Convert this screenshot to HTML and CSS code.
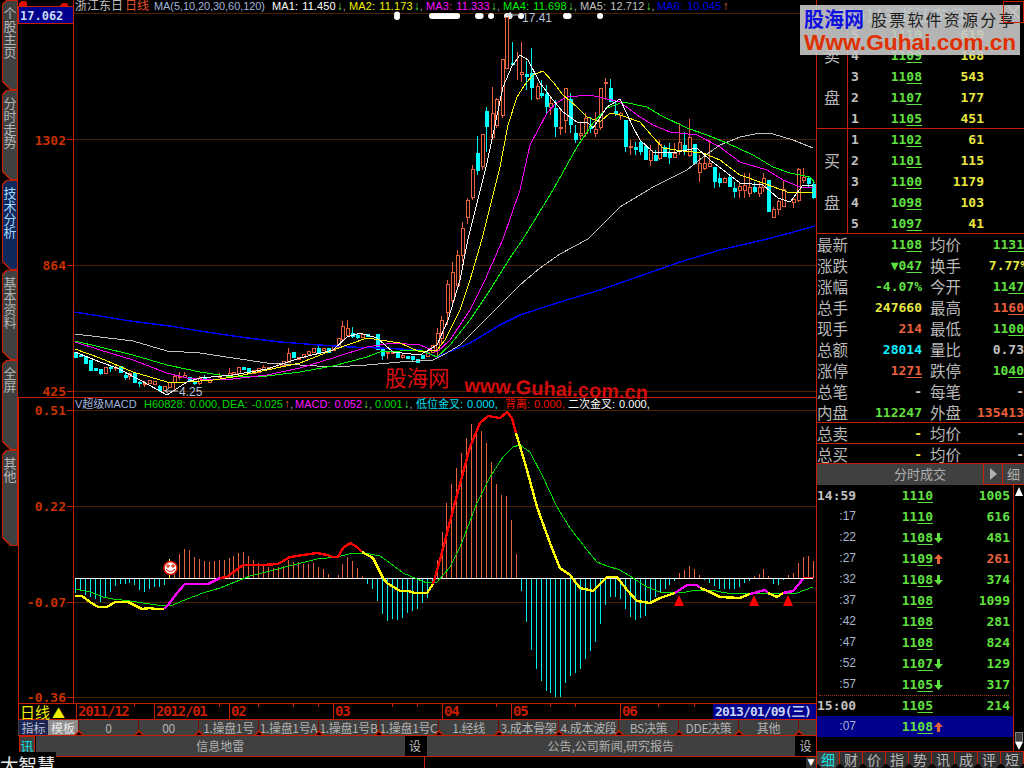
FILE: index.html
```html
<!DOCTYPE html>
<html lang="zh">
<head>
<meta charset="utf-8">
<title>大智慧</title>
<link rel="stylesheet" href="styles.css">
</head>
<body>
<div class="app">
  <nav class="tabs">
    <div class="tab"><div class="tab-in">个股主页</div></div>
    <div class="tab"><div class="tab-in">分时走势</div></div>
    <div class="tab tab-on"><div class="tab-in">技术分析</div></div>
    <div class="tab"><div class="tab-in">基本资料</div></div>
    <div class="tab"><div class="tab-in">全屏</div></div>
    <div class="tab tab-last"><div class="tab-in">其他</div></div>
  </nav>

  <main class="main">
    <div class="plots">
      <svg class="chart" viewBox="18 0 798 703" width="798" height="703">
        <g class="grid">
          <path d="M74 13.5H816M74 139.5H816M74 265.5H816M74 391.5H816M74 410.5H816M74 506.5H816M74 602.5H816M74 697.5H816"/>
        </g>
        <g class="frame">
          <path d="M73.5 0V703M18.5 397V703M18 397.5H816"/>
          <path d="M67 139.5H73M67 265.5H73M67 391.5H73M67 410.5H73M67 506.5H73M67 602.5H73M67 697.5H73"/>
          <path class="blob" d="M19 6V3L21 1H25L27 3V6ZM60 6V5L62 3H66L68 5V6Z"/>
        </g>
        <rect class="pricebox" x="18.5" y="6.5" width="55" height="17"/>
        <text class="pricetxt" x="20" y="20">17.062</text>
        <text class="axis" x="66" y="145">1302</text>
        <text class="axis" x="66" y="270">864</text>
        <text class="axis" x="66" y="396">425</text>
        <text class="axis" x="66" y="415">0.51</text>
        <text class="axis" x="66" y="511">0.22</text>
        <text class="axis" x="66" y="607">-0.07</text>
        <text class="axis" x="66" y="702">-0.36</text>

        <path class="dots" d="M432 16H458M478 16H481M491 16H493M507 16H512M521 16H523M566 16H571M600 16H602M397 14.500V17.500"/>

        <!-- price candles -->
        <path class="wick-r" d="M115.5 365V371M129.5 372V380M144.5 381V387M174.5 374V392M179.5 372V380M184.5 372V378M199.5 376V385M219.5 373V378M229.5 368V377M263.5 365V371M288.5 348V363M342.5 321V340M347.5 320V337M387.5 351V359M402.5 354V359M437.5 328V358M441.5 316V345M447.5 280V325M452.5 262V305M457.5 250V290M462.5 222V262M467.5 198V224M472.5 165V200M482.5 134V170M492.5 87V140M496.5 98V128M502.5 59V118M506.5 17V68M517.5 52V80M521.5 42V82M537.5 83V100M550.5 98V115M560.5 110V135M565.5 88V133M580.5 122V140M585.5 113V137M595.5 112V137M600.5 88V130M605.5 78V100M620.5 112V120M630.5 140V155M650.5 145V166M659.5 140V160M674.5 143V158M679.5 123V155M689.5 119V157M699.5 155V182M704.5 153V170M709.5 140V167M724.5 177V183M739.5 182V198M744.5 173V198M749.5 173V197M759.5 182V197M763.5 173V192M773.5 207V218M778.5 200V215M783.5 180V207M793.5 197V208M798.5 168V202M803.5 168V183"/>
        <path class="body-r" d="M104 367h3V373h-3zM114 367h3V368h-3zM128 373h3V376h-3zM143 383h3V384h-3zM148 380h3V383h-3zM153 381h3V384h-3zM163 386h3V390h-3zM168 382h3V387h-3zM173 376h3V382h-3zM178 376h3V377h-3zM183 375h3V377h-3zM198 378h3V383h-3zM208 379h3V382h-3zM218 376h3V377h-3zM228 373h3V376h-3zM232 372h3V374h-3zM237 367h3V373h-3zM252 370h3V373h-3zM257 368h3V372h-3zM262 367h3V370h-3zM267 367h3V369h-3zM277 363h3V367h-3zM282 361h3V365h-3zM287 353h3V362h-3zM297 357h3V359h-3zM302 354h3V357h-3zM307 351h3V354h-3zM312 348h3V352h-3zM322 348h3V350h-3zM332 346h3V350h-3zM337 338h3V347h-3zM341 326h3V339h-3zM346 328h3V335h-3zM361 334h3V337h-3zM386 352h3V353h-3zM391 352h3V353h-3zM401 355h3V357h-3zM426 352h3V356h-3zM431 345h3V352h-3zM436 333h3V350h-3zM440 320h3V338h-3zM446 284h3V312h-3zM451 272h3V300h-3zM456 255h3V285h-3zM461 228h3V255h-3zM466 200h3V217h-3zM471 169h3V197h-3zM481 134h3V166h-3zM491 113h3V137h-3zM495 99h3V125h-3zM501 59h3V115h-3zM505 17h3V68h-3zM520 72h3V74h-3zM536 86h3V98h-3zM549 103h3V107h-3zM559 127h3V128h-3zM564 88h3V120h-3zM579 133h3V135h-3zM584 118h3V133h-3zM594 129h3V133h-3zM599 88h3V127h-3zM604 82h3V83h-3zM619 113h3V115h-3zM629 146h3V147h-3zM649 150h3V160h-3zM658 144h3V158h-3zM673 153h3V157h-3zM678 142h3V150h-3zM688 137h3V155h-3zM698 163h3V172h-3zM703 163h3V168h-3zM708 163h3V166h-3zM723 178h3V182h-3zM738 186h3V190h-3zM743 185h3V190h-3zM748 187h3V193h-3zM758 187h3V193h-3zM762 178h3V187h-3zM772 209h3V217h-3zM777 201h3V209h-3zM782 189h3V206h-3zM792 199h3V202h-3zM797 169h3V200h-3zM802 177h3V180h-3z"/>
        <path class="wick-c" d="M100.5 369V375M110.5 365V372M125.5 372V380M139.5 381V387M159.5 385V392M194.5 381V385M204.5 375V381M293.5 352V358M318.5 346V354M352.5 327V338M357.5 333V339M382.5 348V360M397.5 353V358M412.5 356V361M477.5 136V175M486.5 107V152M512.5 42V65M526.5 61V90M531.5 48V100M541.5 80V98M546.5 85V115M555.5 100V137M570.5 93V133M575.5 125V143M590.5 117V133M610.5 79V102M615.5 102V116M625.5 120V152M635.5 142V155M640.5 140V155M645.5 145V160M655.5 150V160M664.5 145V157M669.5 143V164M684.5 132V155M694.5 144V165M714.5 167V188M719.5 173V187M729.5 175V187M734.5 182V198M754.5 182V193M768.5 180V212M808.5 177V187M813.5 180V199"/>
        <path class="body-c" d="M74 352h3V357h-3zM79 355h3V356h-3zM84 356h3V363h-3zM89 360h3V370h-3zM94 368h3V370h-3zM99 369h3V373h-3zM109 367h3V368h-3zM119 366h3V372h-3zM124 375h3V377h-3zM133 373h3V382h-3zM138 382h3V383h-3zM158 386h3V390h-3zM188 377h3V381h-3zM193 382h3V383h-3zM203 377h3V379h-3zM242 367h3V369h-3zM247 368h3V373h-3zM292 352h3V357h-3zM317 348h3V352h-3zM327 348h3V352h-3zM351 333h3V336h-3zM356 335h3V337h-3zM366 334h3V336h-3zM376 334h3V349h-3zM381 348h3V355h-3zM396 353h3V357h-3zM406 356h3V358h-3zM411 356h3V359h-3zM416 359h3V362h-3zM421 355h3V358h-3zM476 153h3V170h-3zM485 111h3V126h-3zM511 63h3V64h-3zM525 74h3V76h-3zM530 73h3V87h-3zM540 93h3V95h-3zM545 94h3V106h-3zM554 108h3V126h-3zM569 99h3V124h-3zM574 133h3V139h-3zM589 126h3V128h-3zM609 88h3V101h-3zM614 111h3V113h-3zM624 120h3V146h-3zM634 147h3V149h-3zM639 142h3V151h-3zM644 146h3V159h-3zM654 155h3V160h-3zM663 147h3V156h-3zM668 153h3V157h-3zM683 145h3V151h-3zM693 144h3V163h-3zM713 167h3V181h-3zM718 178h3V182h-3zM728 177h3V186h-3zM733 188h3V191h-3zM753 187h3V191h-3zM767 180h3V211h-3zM807 178h3V183h-3zM812 184h3V197h-3z"/>

        <!-- moving averages -->
        <polyline class="ln ma6" points="74,312 100,316 130,321 170,326 200,331 240,337 280,342 320,345 350,347 380,348 420,350 437,357 470,343 500,325 520,315 560,302 600,290 640,276 680,262 720,250 767,239 790,233 815,226"/>
        <polyline class="ln ma5" points="75,334 100,337 133,341 167,351 200,353 233,358 267,363 300,365 333,367 367,365 400,362 433,360 445,354 460,345 480,325 500,305 520,285 540,268 560,254 588,239 620,207 653,187 687,170 703,157 720,145 740,137 760,133 773,134 793,140 813,148"/>
        <polyline class="ln ma4" points="75,341 100,347 133,355 167,365 200,372 220,375 233,377 267,376 300,372 333,366 367,357 380,352 420,350 437,357 450,345 470,320 490,290 510,258 523,239 553,190 577,147 593,123 607,108 623,102 647,107 660,115 687,128 707,135 727,143 753,155 773,167 790,173 810,177 815,183"/>
        <polyline class="ln ma3" points="75,342 100,350 133,360 167,373 187,378 213,380 233,379 267,375 300,368 333,358 367,347 393,343 420,345 437,352 450,340 470,310 485,280 503,239 520,190 530,145 547,113 556,103 567,97 590,95 620,102 637,115 653,125 670,132 697,135 720,147 740,162 767,170 783,180 800,187 813,187"/>
        <polyline class="ln ma2" points="75,349 100,358 133,372 167,382 187,382 213,380 233,377 267,370 300,363 333,350 367,338 400,343 420,352 437,350 445,340 460,310 470,280 482,239 500,167 508,125 517,97 526,83 533,75 543,71 553,82 563,95 577,107 587,117 600,122 610,113 620,115 640,122 653,137 663,148 683,151 703,153 720,160 740,175 763,183 790,193 802,192 813,192"/>
        <polyline class="ln ma1" points="75,352 100,362 117,368 140,380 167,395 187,382 200,378 233,375 267,369 300,358 333,350 347,337 360,333 377,338 393,352 420,355 437,345 448,320 460,280 468,239 487,163 503,87 512,66 520,55 528,60 540,83 553,100 563,112 577,122 587,122 593,128 607,107 620,99 633,127 640,140 653,152 677,152 697,148 710,160 727,173 740,183 763,185 778,198 790,202 803,185 813,185"/>

        <path class="thin-g" d="M507 15H520M507 15L511 12M507 15L511 18"/>
        <text class="note" x="522" y="22">17.41</text>
        <path class="thin-g" d="M165 391H178M165 391L169 388M165 391L169 394"/>
        <text class="note" x="179" y="396">4.25</text>

        <text class="wm-cn" x="385" y="386">股海网</text>
        <text class="wm-en" x="464" y="392" transform="rotate(2.3 464 392)">www.Guhai.com.cn</text>

        <!-- MACD histogram -->
        <path class="bar-c" d="M75.5 578V593M80.5 578V590M85.5 578V595M90.5 578V597M95.5 578V599M100.5 578V602M105.5 578V597M110.5 578V592M115.5 578V586M120.5 578V584M125.5 578V584M129.5 578V583M134.5 578V585M139.5 578V590M144.5 578V592M149.5 578V589M154.5 578V587M159.5 578V587M164.5 578V585M367.5 578V584M372.5 578V589M377.5 578V601M382.5 578V614M387.5 578V621M392.5 578V619M397.5 578V620M402.5 578V618M407.5 578V613M412.5 578V611M417.5 578V609M422.5 578V603M427.5 578V598M432.5 578V585M521.5 578V591M526.5 578V622M531.5 578V650M536.5 578V669M541.5 578V681M546.5 578V691M550.5 578V693M555.5 578V697M560.5 578V697M565.5 578V683M570.5 578V676M575.5 578V673M580.5 578V669M585.5 578V659M590.5 578V651M595.5 578V642M600.5 578V624M605.5 578V605M610.5 578V597M615.5 578V597M620.5 578V599M625.5 578V609M630.5 578V617M635.5 578V620M640.5 578V618M645.5 578V616M650.5 578V604M655.5 578V597M660.5 578V592M665.5 578V589M669.5 578V585M674.5 578V581M704.5 578V580M709.5 578V583M714.5 578V586M719.5 578V589M724.5 578V589M729.5 578V589M734.5 578V589M739.5 578V587M744.5 578V583M749.5 578V581M773.5 578V584M778.5 578V585M783.5 578V580"/>
        <path class="bar-r" d="M174.5 578V573M179.5 578V554M184.5 578V549M189.5 578V550M194.5 578V557M199.5 578V559M204.5 578V561M209.5 578V562M214.5 578V561M219.5 578V560M224.5 578V560M229.5 578V558M233.5 578V556M238.5 578V553M243.5 578V552M248.5 578V556M253.5 578V560M258.5 578V563M263.5 578V565M268.5 578V567M273.5 578V568M278.5 578V567M283.5 578V566M288.5 578V560M293.5 578V562M298.5 578V562M303.5 578V564M308.5 578V564M313.5 578V563M318.5 578V567M323.5 578V569M328.5 578V574M338.5 578V575M342.5 578V564M347.5 578V557M352.5 578V561M357.5 578V568M362.5 578V576M437.5 578V560M442.5 578V532M446.5 578V503M451.5 578V484M456.5 578V468M461.5 578V453M466.5 578V438M471.5 578V424M476.5 578V432M481.5 578V431M486.5 578V443M491.5 578V462M496.5 578V484M501.5 578V495M506.5 578V496M511.5 578V520M516.5 578V554M679.5 578V573M684.5 578V570M689.5 578V566M694.5 578V569M699.5 578V575M754.5 578V576M759.5 578V574M763.5 578V569M768.5 578V576M788.5 578V575M793.5 578V573M798.5 578V563M803.5 578V557M808.5 578V556M813.5 578V561"/>
        <path class="zero" d="M75 578.5H813"/>

        <!-- MACD lines -->
        <polyline class="ln dea" points="75,589 90,592 103,597 113,599 130,601 143,603 157,605 173,605 187,599 203,593 220,588 240,580 250,576 270,571 297,564 317,559 337,557 353,553 370,554 380,556 390,563 403,573 417,579 427,583 437,582 450,567 460,547 477,503 490,477 503,457 513,447 520,445 530,452 543,477 557,507 570,528 587,550 597,562 607,566 620,570 633,578 647,587 660,592 680,593 697,590 710,590 727,593 750,594 770,593 780,594 797,593 813,587"/>
        <polyline class="thick y" points="75,596 82,596 90,602 98,607 107,607 115,602 128,602 142,609 150,608 155,609 164,609"/>
        <polyline class="thick m" points="164,609 168,605 177,593 185,584 208,584 220,578"/>
        <polyline class="thick r" points="220,578 227,577 243,565 253,565 263,565 278,564 290,557 303,555 317,553 327,555 333,557 338,557 343,548 350,543 357,547 362,552"/>
        <polyline class="thick y" points="362,552 373,558 383,578 387,583 400,591 408,591 415,593 427,593 433,584"/>
        <polyline class="thick r" points="433,584 440,560 453,510 463,473 470,447 480,423 488,416 500,418 507,412 512,418 516,433"/>
        <polyline class="thick y" points="516,433 527,470 537,507 550,543 560,568 570,575 580,588 593,591 607,577 617,577 627,590 637,601 650,603 660,598 675,593"/>
        <polyline class="thick m" points="675,593 687,585 697,585 700,588"/>
        <polyline class="thick y" points="700,588 710,592 720,597 740,598 750,594"/>
        <polyline class="thick m" points="750,594 765,590 768,593"/>
        <polyline class="thick y" points="768,593 777,597 783,593"/>
        <polyline class="thick m" points="783,593 793,591 803,579"/>
        <polyline class="thin-r" points="803,578 813,577"/>

        <path class="tri" d="M674 606H684L679 595ZM749 606H759L754 595ZM783 606H793L788 595Z"/>
        <path class="stick" d="M169.5 559V578"/>
        <circle class="smile" cx="170.5" cy="568" r="6.5"/>
        <path class="smile-f" d="M167 565h2v2h-2zM172 565h2v2h-2zM166 569Q170.500 574 175 569"/>
      </svg>

      <div class="legend legend-top">
        <span class="lg lg-a c-gray">浙江东日</span>
        <span class="lg lg-b c-red">日线</span>
        <span class="lg lg-c c-blue">MA(5,10,20,30,60,120)</span>
        <span class="lg lg-m c-white">MA1: 11.450<i class="c-ga">↓</i><i class="c-comma">,</i></span>
        <span class="lg lg-m c-yel">MA2: 11.173<i class="c-ga">↓</i><i class="c-comma">,</i></span>
        <span class="lg lg-m c-mag">MA3: 11.333<i class="c-ga">↓</i><i class="c-comma">,</i></span>
        <span class="lg lg-m c-lime">MA4: 11.698<i class="c-ga">↓</i><i class="c-comma">,</i></span>
        <span class="lg lg-m c-gray">MA5: 12.712<i class="c-ga">↓</i><i class="c-comma">,</i></span>
        <span class="lg lg-m c-navy">MA6: 10.045<i class="c-ra">↑</i></span>
      </div>
      <div class="legend legend-macd">
        <span class="lg w69 c-blue">V超级MACD</span>
        <span class="lg w78 c-dg">H60828: 0.000,</span>
        <span class="lg w73 c-dg">DEA: -0.025<i class="c-ra">↑</i><i class="c-comma">,</i></span>
        <span class="lg w80 c-mag">MACD: 0.052<i class="c-ga">↓</i><i class="c-comma">,</i></span>
        <span class="lg w41 c-dg">0.001<i class="c-ga">↓</i><i class="c-comma">,</i></span>
        <span class="lg w89 c-cy">低位金叉: 0.000,</span>
        <span class="lg w63 c-rr">背离: 0.000,</span>
        <span class="lg c-white">二次金叉: 0.000,</span>
      </div>
    </div>

    <div class="timeaxis">
      <div class="period">日线<b class="up">▲</b></div>
      <div class="date w80">2011/12</div>
      <div class="date w75">2012/01</div>
      <div class="date w104">02</div>
      <div class="date w109">03</div>
      <div class="date w69">04</div>
      <div class="date w109">05</div>
      <div class="date w93">06</div>
      <div class="curdate">2013/01/09(三)</div>
      <svg class="ticks" viewBox="18 0 798 5" width="798" height="5">
        <path d="M134.500 0V3M219.500 0V3M258.500 0V3M293.500 0V3M318.500 0V3M392.500 0V3M417.500 0V3M496.500 0V3M550.500 0V3M575.500 0V3M658.500 0V3M694.500 0V3"/>
      </svg>
    </div>

    <div class="tplrow">
      <div class="tpl-a">指标</div>
      <div class="tpl-b">模板</div>
      <div class="tpl">0</div>
      <div class="tpl">00</div>
      <div class="tpl">1.操盘1号</div>
      <div class="tpl">1.操盘1号A</div>
      <div class="tpl">1.操盘1号B</div>
      <div class="tpl">1.操盘1号C</div>
      <div class="tpl">1.经线</div>
      <div class="tpl">3.成本骨架</div>
      <div class="tpl">4.成本波段</div>
      <div class="tpl">BS决策</div>
      <div class="tpl">DDE决策</div>
      <div class="tpl">其他</div>
      <div class="tpl tpl-end"></div>
    </div>

    <div class="inforow">
      <div class="xun">讯</div>
      <div class="info">信息地雷</div>
      <div class="set">设</div>
      <div class="info info-2">公告,公司新闻,研究报告</div>
      <div class="set">设</div>
    </div>
    <div class="foot"><div class="footline"></div><div class="footbtn">▼</div></div>
  </main>

  <aside class="panel">
    <div class="stock">600113 浙江东日</div>

    <section class="book">
      <div class="side"><span>卖</span><span>盘</span></div>
      <div class="rows">
        <div class="row"><span class="lv">5</span><span class="pr">11<u>10</u></span><span class="vol">619</span></div>
        <div class="row"><span class="lv">4</span><span class="pr">11<u>09</u></span><span class="vol">168</span></div>
        <div class="row"><span class="lv">3</span><span class="pr">11<u>08</u></span><span class="vol">543</span></div>
        <div class="row"><span class="lv">2</span><span class="pr">11<u>07</u></span><span class="vol">177</span></div>
        <div class="row"><span class="lv">1</span><span class="pr">11<u>05</u></span><span class="vol">451</span></div>
      </div>
    </section>
    <section class="book">
      <div class="side"><span>买</span><span>盘</span></div>
      <div class="rows">
        <div class="row"><span class="lv">1</span><span class="pr">11<u>02</u></span><span class="vol">61</span></div>
        <div class="row"><span class="lv">2</span><span class="pr">11<u>01</u></span><span class="vol">115</span></div>
        <div class="row"><span class="lv">3</span><span class="pr">11<u>00</u></span><span class="vol">1179</span></div>
        <div class="row"><span class="lv">4</span><span class="pr">10<u>98</u></span><span class="vol">103</span></div>
        <div class="row"><span class="lv">5</span><span class="pr">10<u>97</u></span><span class="vol">41</span></div>
      </div>
    </section>

    <section class="stats">
      <div class="kv"><span class="k">最新</span><span class="v g">11<u>08</u></span><span></span><span class="k">均价</span><span class="v g">11<u>31</u></span></div>
      <div class="kv"><span class="k">涨跌</span><span class="v g"><b class="dn">▼</b>0<u>47</u></span><span></span><span class="k">换手</span><span class="v y clip">7.77%</span></div>
      <div class="kv"><span class="k">涨幅</span><span class="v g">-4.07%</span><span></span><span class="k">今开</span><span class="v g">11<u>47</u></span></div>
      <div class="kv"><span class="k">总手</span><span class="v y">247660</span><span></span><span class="k">最高</span><span class="v r">11<u>60</u></span></div>
      <div class="kv"><span class="k">现手</span><span class="v r">214</span><span></span><span class="k">最低</span><span class="v g">11<u>00</u></span></div>
      <div class="kv"><span class="k">总额</span><span class="v c">28014</span><span></span><span class="k">量比</span><span class="v w">0.73</span></div>
      <div class="kv"><span class="k">涨停</span><span class="v r">12<u>71</u></span><span></span><span class="k">跌停</span><span class="v g">10<u>40</u></span></div>
      <div class="kv"><span class="k">总笔</span><span class="v w">-</span><span></span><span class="k">每笔</span><span class="v w">-</span></div>
      <div class="kv"><span class="k">内盘</span><span class="v g">112247</span><span></span><span class="k">外盘</span><span class="v r">135413</span></div>
    </section>
    <section class="sum sum-a">
      <div class="kv"><span class="k">总卖</span><span class="v y">-</span><span></span><span class="k">均价</span><span class="v w">-</span></div>
    </section>
    <section class="sum sum-b">
      <div class="kv"><span class="k">总买</span><span class="v y">-</span><span></span><span class="k">均价</span><span class="v w">-</span></div>
    </section>

    <div class="tickhead">
      <div class="th-t">分时成交</div>
      <div class="th-b"><span class="play"></span></div>
      <div class="th-x">细</div>
    </div>

    <section class="tickwrap">
      <div class="ticklist">
        <div class="tick"><span class="t tb">14:59</span><span class="pr">11<u>10</u></span><span class="ar"></span><span class="tv g">1005</span></div>
        <div class="tick"><span class="t">:17</span><span class="pr">11<u>10</u></span><span class="ar"></span><span class="tv g">616</span></div>
        <div class="tick"><span class="t">:22</span><span class="pr">11<u>08</u></span><span class="ar"><svg class="ic ic-d" viewBox="0 0 9 10"><path d="M3 0H6V5H9L4.500 10 0 5H3Z"/></svg></span><span class="tv g">481</span></div>
        <div class="tick"><span class="t">:27</span><span class="pr">11<u>09</u></span><span class="ar"><svg class="ic ic-u" viewBox="0 0 9 10"><path d="M3 10H6V5H9L4.500 0 0 5H3Z"/></svg></span><span class="tv r">261</span></div>
        <div class="tick"><span class="t">:32</span><span class="pr">11<u>08</u></span><span class="ar"><svg class="ic ic-d" viewBox="0 0 9 10"><path d="M3 0H6V5H9L4.500 10 0 5H3Z"/></svg></span><span class="tv g">374</span></div>
        <div class="tick"><span class="t">:37</span><span class="pr">11<u>08</u></span><span class="ar"></span><span class="tv g">1099</span></div>
        <div class="tick"><span class="t">:42</span><span class="pr">11<u>08</u></span><span class="ar"></span><span class="tv g">281</span></div>
        <div class="tick"><span class="t">:47</span><span class="pr">11<u>08</u></span><span class="ar"></span><span class="tv g">824</span></div>
        <div class="tick"><span class="t">:52</span><span class="pr">11<u>07</u></span><span class="ar"><svg class="ic ic-d" viewBox="0 0 9 10"><path d="M3 0H6V5H9L4.500 10 0 5H3Z"/></svg></span><span class="tv g">129</span></div>
        <div class="tick"><span class="t">:57</span><span class="pr">11<u>05</u></span><span class="ar"><svg class="ic ic-d" viewBox="0 0 9 10"><path d="M3 0H6V5H9L4.500 10 0 5H3Z"/></svg></span><span class="tv g">317</span></div>
        <div class="tick tick-dot"><span class="t tb">15:00</span><span class="pr">11<u>05</u></span><span class="ar"></span><span class="tv g">214</span></div>
        <div class="tick tick-sel"><span class="t">:07</span><span class="pr">11<u>08</u></span><span class="ar"><svg class="ic ic-u" viewBox="0 0 9 10"><path d="M3 10H6V5H9L4.500 0 0 5H3Z"/></svg></span><span class="tv"></span></div>
      </div>
      <div class="scroll">
        <div class="sc-up"></div>
        <div class="sc-fill"></div>
        <div class="sc-thumb"></div>
        <div class="sc-dn"></div>
      </div>
    </section>

    <div class="ptabs">
      <div class="ptab ptab-on">细</div>
      <div class="ptab">财</div>
      <div class="ptab">价</div>
      <div class="ptab">指</div>
      <div class="ptab">势</div>
      <div class="ptab">讯</div>
      <div class="ptab">成</div>
      <div class="ptab">评</div>
      <div class="ptab">短</div>
    </div>

    <div class="promo">
      <div class="promo-top"><span class="promo-a">股海网</span><span class="promo-b">股票软件资源分享</span></div>
      <div class="promo-c">Www.Guhai.com.cn</div>
    </div>
    <div class="closebtn"><svg viewBox="0 0 20 21" width="19" height="20"><path d="M4 4L16 17M16 4L4 17"/></svg></div>
  </aside>

  <div class="brand">大智慧</div>
</div>
</body>
</html>
```
FILE: styles.css
```css
* { box-sizing: border-box; }
html, body { margin: 0; padding: 0; background: #000; overflow: hidden; }
body { font-family: "Noto Sans CJK SC", "Liberation Sans", sans-serif; }
i, b { font-style: normal; font-weight: normal; }
u { text-decoration: underline; text-underline-offset: 2px; text-decoration-thickness: 1px; }

.app { position: relative; display: flex; width: 1024px; height: 768px; overflow: hidden; background: #000; }

/* left tabs */
.tabs { width: 18px; flex: none; display: flex; flex-direction: column; padding-left: 2px; }
.tab { width: 16px; height: 90px; padding: 1px; background: #c81e00;
  clip-path: polygon(4px 0, 100% 0, 100% 100%, 8px 100%, 0 calc(100% - 8px), 0 4px); }
.tab-last { height: 96px; }
.tab-in { height: 100%; background: #404040; color: #b4b4b4; font-size: 13px; line-height: 13px;
  padding-top: 5px; text-align: center; letter-spacing: 0;
  clip-path: polygon(4px 0, 100% 0, 100% 100%, 8px 100%, 0 calc(100% - 8px), 0 4px); }
.tab-on .tab-in { background: #10285c; color: #9fd8ff; }

/* main */
.main { width: 798px; flex: none; display: flex; flex-direction: column; }
.plots { position: relative; height: 703px; }
.chart { display: block; }

.grid path { fill: none; stroke: #4a2200; stroke-width: 1; shape-rendering: crispEdges; }
.frame path { fill: none; stroke: #c81e00; stroke-width: 1; shape-rendering: crispEdges; }
.frame .blob { fill: #e01000; stroke: none; }
.pricebox { fill: #00008c; stroke: #c81e00; stroke-width: 1; shape-rendering: crispEdges; }
.pricetxt { font: bold 12px "DejaVu Sans Mono", monospace; fill: #c8d8f4; }
.axis { font: bold 13px "DejaVu Sans Mono", monospace; fill: #c83000; text-anchor: end; }
.dots { fill: none; stroke: #fff; stroke-width: 6; stroke-dasharray: 0.1 2.400; stroke-linecap: round; }
.wick-r, .bar-r { fill: none; stroke: #e8603c; stroke-width: 1; shape-rendering: crispEdges; }
.body-r { fill: #000; stroke: #e8603c; stroke-width: 1; shape-rendering: crispEdges; }
.wick-c, .bar-c { fill: none; stroke: #00f0f0; stroke-width: 1; shape-rendering: crispEdges; }
.body-c { fill: #00ffff; stroke: #00ffff; stroke-width: 1; shape-rendering: crispEdges; }
.ln { fill: none; stroke-width: 1; shape-rendering: crispEdges; }
.ma1 { stroke: #fff; }
.ma2 { stroke: #ffff00; }
.ma3 { stroke: #ff00ff; }
.ma4 { stroke: #00ff00; }
.ma5 { stroke: #c0c0c0; }
.ma6 { stroke: #0000ff; stroke-width: 1.4; }
.dea { stroke: #00e000; stroke-width: 1; }
.thick { fill: none; stroke-width: 2.4; stroke-linejoin: round; shape-rendering: crispEdges; }
.y { stroke: #ffff00; }
.m { stroke: #ff00ff; }
.r { stroke: #ff0000; }
.thin-r { fill: none; stroke: #ff0000; stroke-width: 1; shape-rendering: crispEdges; }
.zero { stroke: #fff; stroke-width: 1.4; fill: none; shape-rendering: crispEdges; }
.thin-g { fill: none; stroke: #c0c8d8; stroke-width: 1; }
.note { font: 12px "Liberation Sans", sans-serif; fill: #b8c4dc; }
.wm-cn { font: 400 21.500px "Noto Sans CJK SC", sans-serif; fill: #d81010; }
.wm-en { font: bold 20px "Liberation Sans", sans-serif; fill: #d00c0c; }
.tri { fill: #ff0000; }
.stick { fill: none; stroke: #ffff00; stroke-width: 1; shape-rendering: crispEdges; }
.smile { fill: #fff; stroke: #e81000; stroke-width: 1.5; }
.smile-f { fill: none; stroke: #e81000; stroke-width: 1; }

/* legends */
.legend { position: absolute; left: 57px; display: flex; white-space: nowrap; height: 13px;
  font: 11px/13px "Liberation Sans", "Noto Sans CJK SC", sans-serif; }
.legend-top { top: 0; }
.legend-macd { top: 398px; }
.lg { display: block; flex: none; word-spacing: 1px; }
.lg-a { width: 50px; font-size: 12px; }
.lg-b { width: 29px; font-size: 12px; }
.lg-c { width: 118px; letter-spacing: -.08px; }
.lg-m { width: 77px; letter-spacing: .1px; }
.w69 { width: 69px; }
.w78 { width: 78px; }
.w73 { width: 73px; }
.w80 { width: 80px; }
.w41 { width: 41px; }
.w89 { width: 89px; }
.w63 { width: 63px; }
.c-gray { color: #c0c0c0; }
.c-red { color: #e8502c; }
.c-blue { color: #a0b4dc; }
.c-white { color: #fff; }
.c-yel { color: #f0f000; }
.c-mag { color: #ff10ff; }
.c-lime { color: #00f000; }
.c-navy { color: #0000f0; }
.c-dg { color: #00d800; }
.c-cy { color: #00e0f0; }
.c-rr { color: #f01000; }
.c-ga { color: #60e040; margin-left: 1px; font-size: 12px; line-height: 13px; }
.c-ra { color: #e8603c; margin-left: 1px; font-size: 12px; line-height: 13px; }
.c-comma { color: #a0a0a0; }

/* time axis */
.timeaxis { position: relative; height: 16px; display: flex; border-top: 1px solid #c81e00; flex: none;
  font: bold 14px/15px "DejaVu Sans Mono", monospace; color: #c81e00; }
.period { width: 56px; flex: none; color: #f0f000; font: 15px/15px "Noto Sans CJK SC", sans-serif; padding-left: 1px; border-left: 1px solid #c81e00; }
.up { margin-left: 2px; font-size: 13px; }
.date { flex: none; padding-left: 1px; letter-spacing: -1.2px; white-space: nowrap; border-left: 1px solid #c81e00; }
.date.w80 { margin-left: 2px; width: 78px; }
.w75 { width: 75px; }
.w104 { width: 104px; }
.w109 { width: 109px; }
.date.w69 { width: 69px; }
.w93 { width: 93px; }
.curdate { flex: 1; background: #00008c; color: #c8d4f4; font-weight: bold; font-size: 13px; letter-spacing: -.85px; padding-left: 2px; white-space: nowrap; overflow: hidden; }
.ticks { position: absolute; left: 0; top: 0; }
.ticks path { fill: none; stroke: #c81e00; stroke-width: 1; shape-rendering: crispEdges; }

/* template row */
.tplrow { height: 16px; display: flex; flex: none; border-top: 1px solid #c81e00; background: #404040;
  font-size: 12px; line-height: 15px; color: #b0b0b0; text-align: center; white-space: nowrap; }
.tpl-a { width: 29px; flex: none; margin-left: 1px; background: #1c2450; color: #b8c0d8; }
.tpl-b { width: 30px; flex: none; background: #8c8c8c; color: #e8e8e8; }
.tpl { position: relative; width: 60px; flex: none; border-left: 1px solid #701000; overflow: visible; letter-spacing: -.35px; }
.tpl-end { flex: 1; }
.tpl::before { content: ""; position: absolute; left: -5px; bottom: 0; border-style: solid; border-width: 0 5px 5px; border-color: transparent transparent #c81e00; }
.tpl::after { content: ""; position: absolute; left: -3px; bottom: 0; border-style: solid; border-width: 0 3px 3px; border-color: transparent transparent #000; }

/* info row */
.inforow { height: 22px; display: flex; flex: none; border-top: 1px solid #c81e00; border-bottom: 1px solid #c81e00;
  font-size: 12px; line-height: 20px; color: #b0b0b0; text-align: center; }
.xun { width: 16px; flex: none; background: #404040; color: #00e0e0; border: 1px solid #c81e00; margin-left: 1px; font-size: 13px; line-height: 17px; height: 19px; }
.info { flex: 1; background: #404040; margin-left: 1px; }
.info-2 { flex: 1; }
.set { width: 21px; flex: none; color: #c0c0c0; font-size: 12px; }
.foot { flex: 1; position: relative; display: flex; }
.footline { width: 407px; flex: none; border-right: 1px solid #c81e00; }
.footbtn { position: absolute; right: 0; top: 0; width: 10px; height: 12px; background: #303030; color: #fff; font: 9px/11px "DejaVu Sans", sans-serif; text-align: center; }

/* right panel */
.panel { position: relative; width: 208px; flex: none; border-left: 1px solid #c81e00; display: flex; flex-direction: column; }
.stock { height: 24px; flex: none; color: #70e0f0; font-size: 17px; line-height: 20px; padding: 5px 0 0 20px; white-space: nowrap; overflow: hidden; }
.book { height: 105px; flex: none; display: flex; border-bottom: 1px solid #c81e00; }
.side { width: 31px; flex: none; border-right: 1px solid #c81e00; display: flex; flex-direction: column; justify-content: center; align-items: center; gap: 26px; color: #b8b8b8; font-size: 16px; line-height: 16px; }
.rows { flex: 1; }
.row { height: 21px; display: flex; align-items: center; font: bold 13px/21px "DejaVu Sans Mono", monospace; }
.lv { width: 12px; margin-left: 3px; color: #c0c0c0; flex: none; }
.row .pr { width: 59px; text-align: right; color: #60e040; flex: none; }
.vol { width: 62px; text-align: right; color: #e8e840; flex: none; }

.stats { height: 189px; flex: none; border-bottom: 1px solid #c81e00; }
.kv { height: 21px; display: grid; grid-template-columns: 33px 72px 8px 32px 62px;
  align-items: center; font: bold 13px/21px "DejaVu Sans Mono", monospace; white-space: nowrap; }
.k { font: 15.500px/21px "Noto Sans CJK SC", sans-serif; color: #b8b8b8; }
.v { text-align: right; }
.g { color: #60e040; }
.y { color: #e8e840; }
.r { color: #e8603c; }
.c { color: #10f0ff; }
.w { color: #c0c0c0; }
.clip { margin-right: -4px; }
.dn { font-size: 13px; margin-right: 0; }
.sum { flex: none; border-bottom: 1px solid #c81e00; overflow: hidden; }
.sum-a { height: 21px; }
.sum-b { height: 20px; }

.tickhead { height: 21px; flex: none; display: flex; background: #404040; color: #b0b0b0; font-size: 13px; line-height: 20px; text-align: center; }
.th-t { width: 166px; flex: none; padding-left: 40px; }
.th-b { width: 20px; flex: none; border: 1px solid #c81e00; border-top: 0; display: flex; align-items: center; justify-content: center; }
.play { width: 0; height: 0; border-style: solid; border-width: 6px 0 6px 7px; border-color: transparent transparent transparent #b0b0b0; }
.th-x { flex: 1; border-bottom: 1px solid #c81e00; }

.tickwrap { height: 266px; flex: none; display: flex; }
.ticklist { width: 196px; flex: none; }
.tick { height: 21px; display: flex; align-items: center; font: bold 13px/21px "DejaVu Sans Mono", monospace; white-space: nowrap; }
.t { width: 39px; flex: none; text-align: right; color: #a8b4cc; font: 12px/21px "Liberation Sans", sans-serif; }
.t.tb { font: bold 13px/21px "DejaVu Sans Mono", monospace; color: #c0c0c0; }
.tick .pr { width: 77px; flex: none; text-align: right; color: #60e040; }
.ar { width: 12px; flex: none; display: flex; padding-left: 1px; }
.ic { width: 9px; height: 10px; display: block; }
.ic-d { fill: #60e040; }
.ic-u { fill: #e8603c; }
.tv { width: 65px; flex: none; text-align: right; }
.tick-dot { position: relative; }
.tick-dot::before { content: ""; position: absolute; left: 2px; right: 4px; top: 0; border-top: 1px dotted #a03018; }
.tick-sel { background: #00008c; }

.scroll { flex: 1; border-left: 1px solid #c81e00; display: flex; flex-direction: column; padding: 2px 1px 0; }
.sc-up { height: 9px; background: #fff; clip-path: polygon(50% 0, 100% 100%, 0 100%); flex: none; }
.sc-fill { flex: 1; }
.sc-thumb { height: 10px; flex: none; background: #404040; border: 1px solid #808080; }
.sc-dn { height: 8px; margin-bottom: 1px; flex: none; background: #fff; clip-path: polygon(0 0, 100% 0, 50% 100%); }

.ptabs { flex: 1; display: flex; border-top: 1px solid #c81e00; }
.ptab { width: 23px; flex: none; background: #303030; border-right: 1px solid #c81e00; color: #b8b8b8; font-size: 14px; line-height: 15px; text-align: center; clip-path: polygon(0 0, 100% 0, 100% 70%, 80% 100%, 20% 100%, 0 70%); }
.ptab-on { color: #10e8e8; background: #404040; }

.promo { position: absolute; left: -17px; top: 5px; width: 220px; height: 50px; background: rgba(200, 200, 200, .9); padding: 2px 4px; }
.promo-top { display: flex; align-items: center; height: 24px; white-space: nowrap; }
.promo-a { color: #1010e0; font-size: 20px; font-weight: 700; line-height: 24px; width: 67px; flex: none; }
.promo-b { color: #202020; font-size: 16px; letter-spacing: 2.200px; line-height: 24px; }
.promo-c { color: #e03000; font: bold 22.700px/22px "Liberation Sans", sans-serif; white-space: nowrap; }
.closebtn { position: absolute; left: 186px; top: 1px; width: 21px; height: 22px; border: 1px solid #c81e00; }
.closebtn svg { display: block; }
.closebtn path { fill: none; stroke: #d8d8d8; stroke-width: 1; }

.brand { position: absolute; left: 0; top: 752px; width: 56px; height: 16px; background: #000; color: #e8e8e8; font-size: 18.500px; line-height: 24px; white-space: nowrap; overflow: hidden; }
```
